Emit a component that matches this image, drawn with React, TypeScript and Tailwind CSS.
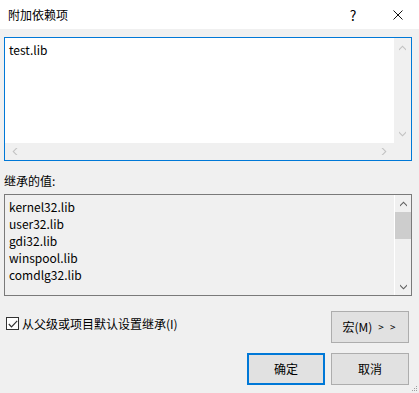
import React from 'react'

const font = { fontFamily: '"Noto Sans CJK SC", "Noto Sans", sans-serif' }

function Chevron({ dir, color }: { dir: 'up' | 'down' | 'left' | 'right'; color: string }) {
  const d = {
    up: 'M0 4 L3.5 0.5 L7 4 L7 5.5 L3.5 2 L0 5.5 Z',
    down: 'M0 0.5 L3.5 4 L7 0.5 L7 2 L3.5 5.5 L0 2 Z',
    left: 'M4 0 L0.5 3.5 L4 7 L5.5 7 L2 3.5 L5.5 0 Z',
    right: 'M0.5 0 L4 3.5 L0.5 7 L2 7 L5.5 3.5 L2 0 Z',
  }[dir]
  const vertical = dir === 'up' || dir === 'down'
  return (
    <svg width={vertical ? 7 : 6} height={vertical ? 6 : 7} viewBox={vertical ? '0 0 7 6' : '0 0 6 7'}>
      <path d={d} fill={color} />
    </svg>
  )
}

export default function App() {
  const inherited = ['kernel32.lib', 'user32.lib', 'gdi32.lib', 'winspool.lib', 'comdlg32.lib']

  return (
    <div className="relative flex h-[393px] w-[419px] flex-col bg-[#f0f0f0] text-[12px] text-black" style={font}>
      {/* title bar */}
      <div className="flex h-[29px] items-center bg-white pl-[8px]">
        <span className="flex-1 leading-none">附加依赖项</span>
        <span className="w-[14px] text-center text-[14px] leading-none">?</span>
        <svg className="ml-[33px] mr-[16px]" width="10" height="10" viewBox="0 0 10 10">
          <path d="M0.5 0.5 L9.5 9.5 M9.5 0.5 L0.5 9.5" stroke="#111" strokeWidth="1" />
        </svg>
      </div>

      <div className="flex flex-col pl-[4px] pr-[7px] pt-[8px]">
        {/* editable box */}
        <div className="grid h-[124px] grid-cols-[1fr_17px] grid-rows-[1fr_17px] border border-[#0078d7] bg-white">
          <div className="px-[4px] pt-[3px] leading-[17px]">test.lib</div>
          <div className="flex flex-col items-center justify-between bg-[#f0f0f0] pb-[6px] pt-[7px]">
            <Chevron dir="up" color="#c2c2c2" />
            <Chevron dir="down" color="#c2c2c2" />
          </div>
          <div className="flex items-center justify-between bg-[#f0f0f0] px-[7px]">
            <Chevron dir="left" color="#c2c2c2" />
            <Chevron dir="right" color="#c2c2c2" />
          </div>
          <div className="bg-[#f0f0f0]" />
        </div>

        <div className="mt-[11px] leading-[17px]">继承的值:</div>

        {/* inherited values */}
        <div className="mt-[5px] flex h-[102px] border border-[#7a7a7a] bg-[#f0f0f0]">
          <div className="flex-1 px-[4px] pt-[3px] leading-[17px]">
            {inherited.map((lib) => (
              <div key={lib}>{lib}</div>
            ))}
          </div>
          <div className="flex w-[17px] flex-col border-l border-white">
            <div className="flex h-[17px] items-center justify-center">
              <Chevron dir="up" color="#606060" />
            </div>
            <div className="h-[27px] bg-[#cdcdcd]" />
            <div className="flex-1" />
            <div className="flex h-[17px] items-center justify-center">
              <Chevron dir="down" color="#606060" />
            </div>
          </div>
        </div>

        {/* checkbox + macro button */}
        <div className="mt-[15px] flex items-start">
          <div className="mt-[6px] flex flex-1 items-center pl-[2px]">
            <span className="flex h-[13px] w-[13px] items-center justify-center border border-[#333] bg-white">
              <svg width="10" height="8" viewBox="0 0 10 8">
                <path d="M0.8 4 L3.5 6.8 L9.2 0.8" stroke="#333" strokeWidth="1.2" fill="none" />
              </svg>
            </span>
            <span className="ml-[3px] leading-none">从父级或项目默认设置继承(I)</span>
          </div>
          <button className="mr-[3px] flex h-[32px] w-[78px] items-center justify-center border border-[#adadad] bg-[#e1e1e1] leading-none">
            宏(M)<span className="ml-[6px] text-[10px] tracking-[2px]">&gt; &gt;</span>
          </button>
        </div>

        {/* OK / Cancel */}
        <div className="mr-[3px] mt-[10px] flex justify-end gap-[6px]">
          <button className="flex h-[32px] w-[78px] items-center justify-center border-2 border-[#0078d7] bg-[#e1e1e1] leading-none">
            确定
          </button>
          <button className="flex h-[32px] w-[78px] items-center justify-center border border-[#adadad] bg-[#e1e1e1] leading-none">
            取消
          </button>
        </div>
      </div>

      {/* resize grip */}
      <svg className="absolute bottom-[1px] right-[1px]" width="7" height="7" viewBox="0 0 7 7">
        <rect x="5" y="1" width="1" height="1" fill="#a0a0a0" />
        <rect x="3" y="3" width="1" height="1" fill="#a0a0a0" />
        <rect x="5" y="3" width="1" height="1" fill="#a0a0a0" />
        <rect x="1" y="5" width="1" height="1" fill="#a0a0a0" />
        <rect x="3" y="5" width="1" height="1" fill="#a0a0a0" />
        <rect x="5" y="5" width="1" height="1" fill="#a0a0a0" />
      </svg>
    </div>
  )
}
